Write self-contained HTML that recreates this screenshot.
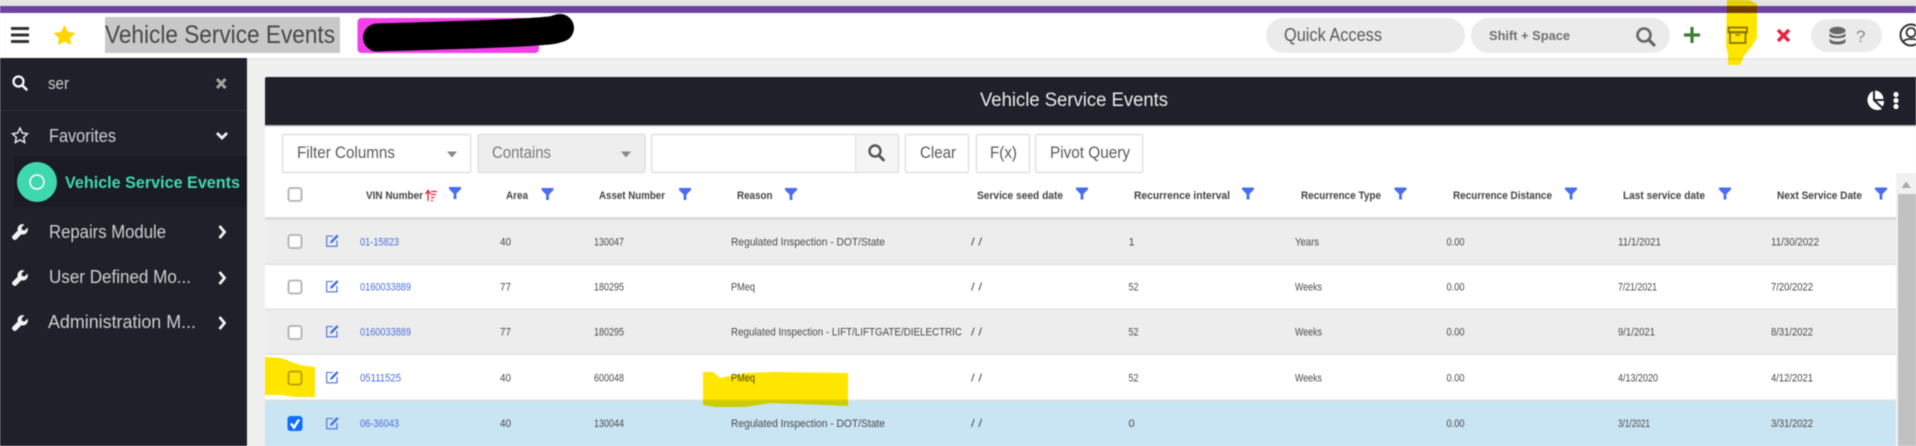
<!DOCTYPE html>
<html lang="en"><head><meta charset="utf-8"><title>Vehicle Service Events</title>
<style>
html,body{margin:0;padding:0;width:1916px;height:446px;overflow:hidden;background:#f0f0f0}
svg{display:block;filter:blur(.5px)}
text{font-family:"Liberation Sans",sans-serif}
.h{font-size:11px;font-weight:bold;fill:#444}
.c{font-size:11px;fill:#4a4a4a}
.l{font-size:11px;fill:#4a6ee0}
.s{font-size:18px;fill:#cfcfcf}
.b{font-size:17px;fill:#5a5a5a}
</style></head><body>
<svg width="1916" height="446" viewBox="0 0 1916 446" xmlns="http://www.w3.org/2000/svg">
<defs>
<symbol id="fn" viewBox="0 0 12 12" overflow="visible"><path d="M0 0H12V2L7.4 6.6V12H4.6V6.6L0 2Z" fill="#4a6cf0"/></symbol>
<symbol id="wr" viewBox="0 0 16 16" overflow="visible"><path d="M15.5 3.6 12.6 6.5 10 6 9.5 3.4 12.4.5C10.5-.2 8.3.2 6.9 1.7 5.6 3 5.2 4.9 5.7 6.6L.6 11.7c-.8.8-.8 2.1 0 2.9l.8.8c.8.8 2.1.8 2.9 0l5.1-5.1c1.7.5 3.6.1 4.9-1.2 1.5-1.4 1.9-3.6 1.2-5.5z" fill="#f2f2f2"/></symbol>
<symbol id="ed" viewBox="0 0 13 13" overflow="visible"><path d="M7 2H.7V12.3H11V6.5" fill="none" stroke="#4a6ee0" stroke-width="1.1"/><path d="M4 9.3 4.6 7 10.8.6 12.6 2.3 6.3 8.7Z" fill="#4a6ee0"/></symbol>
<symbol id="cb" viewBox="0 0 15 15" overflow="visible"><rect x="1" y="1" width="13" height="13" rx="2.5" fill="#fff" stroke="#b0b0b0" stroke-width="1.800"/></symbol>
</defs>

<!-- top bars -->
<rect width="1916" height="6" fill="#e4e4e4"/>
<rect y="6" width="1916" height="7" fill="#6f42a1"/>
<rect y="13" width="1916" height="45" fill="#fff"/>
<rect y="58" width="1916" height="2" fill="#e8e8e8"/>

<!-- header left -->
<rect x="11" y="27" width="18" height="3" fill="#333"/><rect x="11" y="33.500" width="18" height="3" fill="#333"/><rect x="11" y="40" width="18" height="3" fill="#333"/>
<path d="M64.500 25 67.900 32 75.500 33 70 38.300 71.300 45 64.500 41.600 57.700 45 59 38.300 53.500 33 61.100 32Z" fill="#ffd500"/>
<rect x="105" y="17" width="235" height="36" fill="#c8c8c8"/>
<text x="105" y="43" font-size="25" fill="#484848" textLength="230" lengthAdjust="spacingAndGlyphs">Vehicle Service Events</text>
<rect x="357.500" y="18" width="181.500" height="35" rx="4" fill="#f23fe9"/>
<path d="M377 37.500C430 36 500 34 530 32S552 30 560 28" fill="none" stroke="#000" stroke-width="28" stroke-linecap="round"/>

<!-- header right -->
<rect x="1266" y="18" width="199" height="35" rx="17.500" fill="#ebebeb"/>
<text x="1284" y="41" font-size="18" fill="#5a5a5a" textLength="98" lengthAdjust="spacingAndGlyphs">Quick Access</text>
<rect x="1471" y="18" width="199" height="35" rx="17.500" fill="#ebebeb"/>
<text x="1489" y="40" font-size="13" font-weight="bold" fill="#707070" textLength="81" lengthAdjust="spacingAndGlyphs">Shift + Space</text>
<circle cx="1644" cy="35" r="6.500" fill="none" stroke="#666" stroke-width="2.600"/><path d="M1649 40 1654 45" stroke="#666" stroke-width="3.200" stroke-linecap="round"/>
<path d="M1692 27V43M1684 35H1700" stroke="#3a7d34" stroke-width="3.200"/>
<path d="M1727 0H1749L1757 4V38L1752 46 1744 56 1740 65H1728V55L1726 45Z" fill="#ffe600" style="mix-blend-mode:multiply"/>
<rect x="1728.500" y="27.500" width="18.500" height="5" fill="none" stroke="#8a7400" stroke-width="1.800"/>
<rect x="1730" y="32" width="15.500" height="11" fill="none" stroke="#8a7400" stroke-width="1.800"/>
<path d="M1735.500 35H1740" stroke="#8a7400" stroke-width="1.500"/>
<path d="M1778 30 1789 41M1789 30 1778 41" stroke="#e8213f" stroke-width="3.400"/>
<rect x="1811" y="19" width="71" height="33" rx="16.500" fill="#ebebeb"/>
<g fill="#666"><ellipse cx="1837.500" cy="30.500" rx="8" ry="3.800"/><path d="M1829.500 33V36C1830 39 1845 39 1845.500 36V33C1843 37 1832 37 1829.500 33Z"/><path d="M1829.500 38.500V41.500C1830 45.500 1845 45.500 1845.500 41.500V38.500C1843 42.500 1832 42.500 1829.500 38.500Z"/></g>
<text x="1856" y="42" font-size="17" fill="#888">?</text>
<circle cx="1911" cy="35" r="10.500" fill="none" stroke="#333" stroke-width="2"/><circle cx="1911" cy="32.500" r="4.500" fill="none" stroke="#333" stroke-width="1.800"/><path d="M1903 42C1905 38 1917 38 1919 42" fill="none" stroke="#333" stroke-width="1.800"/>

<!-- sidebar -->
<rect y="58" width="247" height="388" fill="#1f202a"/>
<circle cx="18.500" cy="81.500" r="5" fill="none" stroke="#fff" stroke-width="2.200"/><path d="M22.500 85.500 26.500 89.500" stroke="#fff" stroke-width="2.600" stroke-linecap="round"/>
<text x="48" y="89" font-size="17" fill="#cfcfcf" textLength="21" lengthAdjust="spacingAndGlyphs">ser</text>
<path d="M217 79 225.500 88M225.500 79 217 88" stroke="#a5a5a5" stroke-width="3"/>
<rect y="110" width="247" height="1" fill="#2d2e39"/>
<path d="M20 128 22.300 133 27.500 133.700 23.700 137.300 24.700 142.500 20 139.900 15.300 142.500 16.300 137.300 12.500 133.700 17.700 133Z" fill="none" stroke="#f2f2f2" stroke-width="1.400"/>
<text class="s" x="49" y="142" textLength="67" lengthAdjust="spacingAndGlyphs">Favorites</text>
<path d="M217 133 222 138 227 133" fill="none" stroke="#f2f2f2" stroke-width="2.800"/>
<rect x="14" y="156" width="233" height="51" fill="#1a1b24"/>
<circle cx="37" cy="182" r="20" fill="#3fd8ae"/><circle cx="37" cy="182" r="7" fill="none" stroke="#fff" stroke-width="1.500"/>
<text x="65" y="188" font-size="17" font-weight="bold" fill="#3fd8ae" textLength="175" lengthAdjust="spacingAndGlyphs">Vehicle Service Events</text>
<use href="#wr" x="12" y="224" width="16" height="16"/>
<text class="s" x="49" y="238" textLength="117" lengthAdjust="spacingAndGlyphs">Repairs Module</text>
<path d="M219.500 226 224.500 232 219.500 238" fill="none" stroke="#f2f2f2" stroke-width="2.800"/>
<use href="#wr" x="12" y="270" width="16" height="16"/>
<text class="s" x="49" y="283" textLength="142" lengthAdjust="spacingAndGlyphs">User Defined Mo...</text>
<path d="M219.500 272 224.500 278 219.500 284" fill="none" stroke="#f2f2f2" stroke-width="2.800"/>
<use href="#wr" x="12" y="315" width="16" height="16"/>
<text class="s" x="48" y="328" textLength="148" lengthAdjust="spacingAndGlyphs">Administration M...</text>
<path d="M219.500 317 224.500 323 219.500 329" fill="none" stroke="#f2f2f2" stroke-width="2.800"/>

<!-- panel -->
<rect x="265" y="126" width="1651" height="320" fill="#fff"/>
<path d="M265 126V79Q265 77 267 77H1916V126Z" fill="#1f202a"/>
<rect x="265" y="125" width="1651" height="1.500" fill="#bdbdbd"/>
<text x="980" y="106" font-size="19" fill="#ececec" textLength="188" lengthAdjust="spacingAndGlyphs">Vehicle Service Events</text>
<path d="M1873 91A9.500 9.500 0 1 0 1882 109L1873 100.500Z" fill="#fff"/><path d="M1875 90.500A9 9 0 0 1 1883.500 99H1875Z" fill="#fff"/><path d="M1876.500 101H1884A9 9 0 0 1 1882.500 106.500Z" fill="#fff"/>
<circle cx="1896" cy="94.500" r="2.600" fill="#fff"/><circle cx="1896" cy="100.500" r="2.600" fill="#fff"/><circle cx="1896" cy="106.500" r="2.600" fill="#fff"/>

<!-- filter row -->
<rect x="282.500" y="134.500" width="188" height="38" rx="2" fill="#fff" stroke="#e0e0e0" stroke-width="1.500"/>
<text class="b" x="297" y="158" textLength="98" lengthAdjust="spacingAndGlyphs">Filter Columns</text>
<path d="M447 151.500H457L452 157.500Z" fill="#888"/>
<rect x="478" y="134.500" width="167" height="38" rx="2" fill="#eee" stroke="#e0e0e0" stroke-width="1.500"/>
<text x="492" y="158" font-size="17" fill="#7a7a7a" textLength="59" lengthAdjust="spacingAndGlyphs">Contains</text>
<path d="M621 151.500H631L626 157.500Z" fill="#888"/>
<rect x="651.500" y="134.500" width="247" height="38" rx="2" fill="#fff" stroke="#e0e0e0" stroke-width="1.500"/>
<rect x="855" y="135.500" width="43" height="36" fill="#f5f5f5"/><rect x="855" y="135" width="1" height="37" fill="#e0e0e0"/>
<circle cx="875" cy="151" r="5.500" fill="none" stroke="#555" stroke-width="2.400"/><path d="M879 155.500 883.500 160" stroke="#555" stroke-width="2.800" stroke-linecap="round"/>
<rect x="905.500" y="134.500" width="63" height="38" rx="2" fill="#fff" stroke="#e0e0e0" stroke-width="1.500"/>
<text class="b" x="920" y="158" textLength="36" lengthAdjust="spacingAndGlyphs">Clear</text>
<rect x="976.500" y="134.500" width="53" height="38" rx="2" fill="#fff" stroke="#e0e0e0" stroke-width="1.500"/>
<text class="b" x="990" y="158" textLength="27" lengthAdjust="spacingAndGlyphs">F(x)</text>
<rect x="1035.500" y="134.500" width="107" height="38" rx="2" fill="#fff" stroke="#e0e0e0" stroke-width="1.500"/>
<text class="b" x="1050" y="158" textLength="80" lengthAdjust="spacingAndGlyphs">Pivot Query</text>

<!-- table head -->
<use href="#cb" x="287.500" y="187" width="15" height="15"/>
<text class="h" x="366" y="199" textLength="57" lengthAdjust="spacingAndGlyphs">VIN Number</text>
<path d="M428 191V201M425.500 194 428 190.500 430.500 194M431 191.500H437M431 194.500H436M431 197.500H434.500M431 200.500H433" fill="none" stroke="#e8213f" stroke-width="1.300"/>
<use href="#fn" x="449" y="187" width="12" height="12"/>
<text class="h" x="506" y="199" textLength="22" lengthAdjust="spacingAndGlyphs">Area</text>
<use href="#fn" x="541.500" y="188" width="12" height="12"/>
<text class="h" x="599" y="199" textLength="66" lengthAdjust="spacingAndGlyphs">Asset Number</text>
<use href="#fn" x="679" y="188" width="12" height="12"/>
<text class="h" x="737" y="199" textLength="35.500" lengthAdjust="spacingAndGlyphs">Reason</text>
<use href="#fn" x="785" y="188" width="12" height="12"/>
<text class="h" x="977" y="199" textLength="86" lengthAdjust="spacingAndGlyphs">Service seed date</text>
<use href="#fn" x="1076" y="187.500" width="12" height="12"/>
<text class="h" x="1134" y="199" textLength="96" lengthAdjust="spacingAndGlyphs">Recurrence interval</text>
<use href="#fn" x="1242" y="187.500" width="12" height="12"/>
<text class="h" x="1301" y="199" textLength="80" lengthAdjust="spacingAndGlyphs">Recurrence Type</text>
<use href="#fn" x="1394.500" y="187.500" width="12" height="12"/>
<text class="h" x="1453" y="199" textLength="99" lengthAdjust="spacingAndGlyphs">Recurrence Distance</text>
<use href="#fn" x="1565" y="187.500" width="12" height="12"/>
<text class="h" x="1623" y="199" textLength="82" lengthAdjust="spacingAndGlyphs">Last service date</text>
<use href="#fn" x="1719" y="187.500" width="12" height="12"/>
<text class="h" x="1777" y="199" textLength="85" lengthAdjust="spacingAndGlyphs">Next Service Date</text>
<use href="#fn" x="1875" y="187.500" width="12" height="12"/>

<!-- rows -->
<rect x="265" y="217" width="1631" height="3" fill="#dcdcdc"/>
<rect x="265" y="220" width="1631" height="44" fill="#ededed"/>
<rect x="265" y="264" width="1631" height="45" fill="#fff"/>
<rect x="265" y="309" width="1631" height="45" fill="#ededed"/>
<rect x="265" y="354" width="1631" height="46" fill="#fff"/>
<rect x="265" y="400" width="1631" height="46" fill="#c9e4f2"/>
<rect x="265" y="263.500" width="1631" height="1.500" fill="#e2e2e2"/>
<rect x="265" y="308.500" width="1631" height="1.500" fill="#e2e2e2"/>
<rect x="265" y="353.500" width="1631" height="1.500" fill="#e2e2e2"/>
<rect x="265" y="399.500" width="1631" height="1.500" fill="#e2e2e2"/>

<!-- row 1 -->
<use href="#cb" x="287.500" y="234" width="15" height="15"/><use href="#ed" x="326" y="234" width="13" height="13"/>
<text class="l" x="360" y="245.500" textLength="39" lengthAdjust="spacingAndGlyphs">01-15823</text>
<text class="c" x="500" y="245.500" textLength="11" lengthAdjust="spacingAndGlyphs">40</text>
<text class="c" x="594" y="245.500" textLength="30" lengthAdjust="spacingAndGlyphs">130047</text>
<text class="c" x="731" y="245.500" textLength="154" lengthAdjust="spacingAndGlyphs">Regulated Inspection - DOT/State</text>
<text class="c" x="971" y="245.500" textLength="11" lengthAdjust="spacingAndGlyphs">/ /</text>
<text class="c" x="1128.500" y="245.500">1</text>
<text class="c" x="1295" y="245.500" textLength="24" lengthAdjust="spacingAndGlyphs">Years</text>
<text class="c" x="1446.500" y="245.500" textLength="18" lengthAdjust="spacingAndGlyphs">0.00</text>
<text class="c" x="1618" y="245.500" textLength="43" lengthAdjust="spacingAndGlyphs">11/1/2021</text>
<text class="c" x="1771" y="245.500" textLength="48" lengthAdjust="spacingAndGlyphs">11/30/2022</text>

<!-- row 2 -->
<use href="#cb" x="287.500" y="279.500" width="15" height="15"/><use href="#ed" x="326" y="279.500" width="13" height="13"/>
<text class="l" x="360" y="290.500" textLength="51" lengthAdjust="spacingAndGlyphs">0160033889</text>
<text class="c" x="500" y="290.500" textLength="11" lengthAdjust="spacingAndGlyphs">77</text>
<text class="c" x="594" y="290.500" textLength="30" lengthAdjust="spacingAndGlyphs">180295</text>
<text class="c" x="731" y="290.500" textLength="24" lengthAdjust="spacingAndGlyphs">PMeq</text>
<text class="c" x="971" y="290.500" textLength="11" lengthAdjust="spacingAndGlyphs">/ /</text>
<text class="c" x="1128.500" y="290.500" textLength="10" lengthAdjust="spacingAndGlyphs">52</text>
<text class="c" x="1295" y="290.500" textLength="27" lengthAdjust="spacingAndGlyphs">Weeks</text>
<text class="c" x="1446.500" y="290.500" textLength="18" lengthAdjust="spacingAndGlyphs">0.00</text>
<text class="c" x="1618" y="290.500" textLength="39" lengthAdjust="spacingAndGlyphs">7/21/2021</text>
<text class="c" x="1771" y="290.500" textLength="42" lengthAdjust="spacingAndGlyphs">7/20/2022</text>

<!-- row 3 -->
<use href="#cb" x="287.500" y="325" width="15" height="15"/><use href="#ed" x="326" y="324.500" width="13" height="13"/>
<text class="l" x="360" y="335.500" textLength="51" lengthAdjust="spacingAndGlyphs">0160033889</text>
<text class="c" x="500" y="335.500" textLength="11" lengthAdjust="spacingAndGlyphs">77</text>
<text class="c" x="594" y="335.500" textLength="30" lengthAdjust="spacingAndGlyphs">180295</text>
<text class="c" x="731" y="335.500" textLength="231" lengthAdjust="spacingAndGlyphs">Regulated Inspection - LIFT/LIFTGATE/DIELECTRIC</text>
<text class="c" x="971" y="335.500" textLength="11" lengthAdjust="spacingAndGlyphs">/ /</text>
<text class="c" x="1128.500" y="335.500" textLength="10" lengthAdjust="spacingAndGlyphs">52</text>
<text class="c" x="1295" y="335.500" textLength="27" lengthAdjust="spacingAndGlyphs">Weeks</text>
<text class="c" x="1446.500" y="335.500" textLength="18" lengthAdjust="spacingAndGlyphs">0.00</text>
<text class="c" x="1618" y="335.500" textLength="37" lengthAdjust="spacingAndGlyphs">9/1/2021</text>
<text class="c" x="1771" y="335.500" textLength="42" lengthAdjust="spacingAndGlyphs">8/31/2022</text>

<!-- row 4 -->
<use href="#cb" x="287.500" y="370.500" width="15" height="15"/><use href="#ed" x="326" y="370.500" width="13" height="13"/>
<text class="l" x="360" y="381.500" textLength="41" lengthAdjust="spacingAndGlyphs">05111525</text>
<text class="c" x="500" y="381.500" textLength="11" lengthAdjust="spacingAndGlyphs">40</text>
<text class="c" x="594" y="381.500" textLength="30" lengthAdjust="spacingAndGlyphs">600048</text>
<text class="c" x="731" y="381.500" textLength="24" lengthAdjust="spacingAndGlyphs">PMeq</text>
<text class="c" x="971" y="381.500" textLength="11" lengthAdjust="spacingAndGlyphs">/ /</text>
<text class="c" x="1128.500" y="381.500" textLength="10" lengthAdjust="spacingAndGlyphs">52</text>
<text class="c" x="1295" y="381.500" textLength="27" lengthAdjust="spacingAndGlyphs">Weeks</text>
<text class="c" x="1446.500" y="381.500" textLength="18" lengthAdjust="spacingAndGlyphs">0.00</text>
<text class="c" x="1618" y="381.500" textLength="40" lengthAdjust="spacingAndGlyphs">4/13/2020</text>
<text class="c" x="1771" y="381.500" textLength="42" lengthAdjust="spacingAndGlyphs">4/12/2021</text>

<!-- row 5 -->
<rect x="287.500" y="416" width="15" height="15" rx="3" fill="#0d6efd"/><path d="M291 423.500 294 427.500 299 419.500" fill="none" stroke="#fff" stroke-width="2.400"/>
<use href="#ed" x="326" y="416.500" width="13" height="13"/>
<text class="l" x="360" y="427" textLength="39" lengthAdjust="spacingAndGlyphs">06-36043</text>
<text class="c" x="500" y="427" textLength="11" lengthAdjust="spacingAndGlyphs">40</text>
<text class="c" x="594" y="427" textLength="30" lengthAdjust="spacingAndGlyphs">130044</text>
<text class="c" x="731" y="427" textLength="154" lengthAdjust="spacingAndGlyphs">Regulated Inspection - DOT/State</text>
<text class="c" x="971" y="427" textLength="11" lengthAdjust="spacingAndGlyphs">/ /</text>
<text class="c" x="1128.500" y="427">0</text>
<text class="c" x="1446.500" y="427" textLength="18" lengthAdjust="spacingAndGlyphs">0.00</text>
<text class="c" x="1618" y="427" textLength="32" lengthAdjust="spacingAndGlyphs">3/1/2021</text>
<text class="c" x="1771" y="427" textLength="42" lengthAdjust="spacingAndGlyphs">3/31/2022</text>

<!-- scrollbar -->
<rect x="1896" y="173" width="20" height="273" fill="#f1f1f1"/>
<path d="M1901.500 188 1906 181.500 1911 188Z" fill="#aaa"/>
<rect x="1898" y="194" width="18" height="252" fill="#c1c1c1"/>

<!-- yellow highlights -->
<path d="M265 357 281 358 300 365 315 367V397H296L280 395H265Z" fill="#ffe600" style="mix-blend-mode:multiply"/>
<path d="M703 372H713L720 378 745 373 775 372 848 373V406L800 404 770 403 745 407 715 407 703 405Z" fill="#ffe600" style="mix-blend-mode:multiply"/>
</svg>
</body></html>
